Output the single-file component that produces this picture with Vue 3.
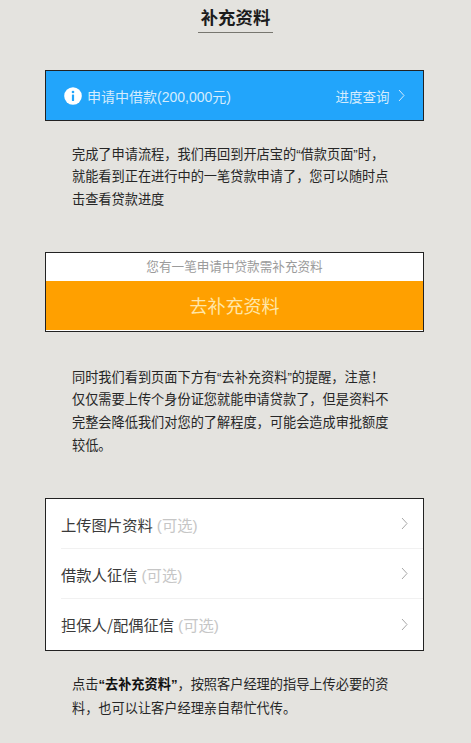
<script setup>
const rows = [
  { name: '上传图片资料', note: '(可选)' },
  { name: '借款人征信', note: '(可选)' },
  { name: '担保人/配偶征信', note: '(可选)' }
]
</script>

<template>
  <div class="page">
    <header class="head"><h1 class="title">补充资料</h1></header>

    <section class="card bluebar">
      <div class="bl">
        <svg class="info" width="18" height="18" viewBox="0 0 18 18"><circle cx="9" cy="9" r="8.8" fill="#fff"/><circle cx="9" cy="5" r="1.3" fill="#22a5fb"/><rect x="7.9" y="7.4" width="2.2" height="6.6" rx="0.6" fill="#22a5fb"/></svg>
        <span>申请中借款(200,000元)</span>
      </div>
      <div class="br">
        <span>进度查询</span>
        <svg width="7" height="13" viewBox="0 0 7 13"><path d="M1 1l5 5.5-5 5.5" fill="none" stroke="#cfe9fd" stroke-width="1"/></svg>
      </div>
    </section>

    <p class="para p1">完成了申请流程，我们再回到开店宝的“借款页面”时，就能看到正在进行中的一笔贷款申请了，您可以随时点击查看贷款进度</p>

    <section class="card cta">
      <div class="notice">您有一笔申请中贷款需补充资料</div>
      <div class="action">去补充资料</div>
    </section>

    <p class="para p2">同时我们看到页面下方有“去补充资料”的提醒，注意！仅仅需要上传个身份证您就能申请贷款了，但是资料不完整会降低我们对您的了解程度，可能会造成审批额度较低。</p>

    <section class="card list">
      <div v-for="r in rows" :key="r.name" class="row">
        <span class="rname">{{ r.name }}</span><span class="rnote">{{ r.note }}</span>
        <svg class="chev" width="7" height="13" viewBox="0 0 7 13"><path d="M1 1l5 5.5-5 5.5" fill="none" stroke="#a8a8a8" stroke-width="1"/></svg>
      </div>
    </section>

    <p class="para p3">点击<b>“去补充资料”</b>，按照客户经理的指导上传必要的资料，也可以让客户经理亲自帮忙代传。</p>
  </div>
</template>

<style>
html, body { margin: 0; background: #e4e3df; }
</style>

<style scoped>
.page {
  width: 471px;
  height: 743px;
  overflow: hidden;
  background-color: #e4e3df;
  font-family: "Liberation Sans", "Noto Sans CJK SC", sans-serif;
  color: #222;
  box-sizing: border-box;
  padding-top: 4px;
}
.head { display: flex; justify-content: center; }
.title {
  margin: 0;
  width: 75px;
  text-align: center;
  font-size: 17.4px;
  line-height: 28px;
  font-weight: 700;
  color: #1c1c1c;
  border-bottom: 1px solid #77766f;
  white-space: nowrap;
}
.card {
  margin: 0 47px 0 45px;
  box-sizing: border-box;
  border: 1.5px solid #222;
}
.bluebar {
  margin-top: 37px;
  height: 51px;
  background: #22a5fb;
  color: #d4ecfd;
  font-size: 14px;
  display: flex;
  align-items: center;
  justify-content: space-between;
  padding: 0 18.5px 0 18px;
}
.bl { display: flex; align-items: center; gap: 5px; }
.br { display: flex; align-items: center; gap: 8px; font-size: 13.5px; }
.info { flex: none; }
.para {
  margin: 0 78px 0 72px;
  font-size: 13.2px;
  line-height: 22.7px;
  color: #262626;
}
.p1 { margin-top: 22.6px; }
.cta { margin-top: 40.3px; height: 80px; background: #fff; overflow: hidden; }
.notice {
  height: 27.5px;
  padding-top: 1px;
  box-sizing: border-box;
  line-height: 26.5px;
  text-align: center;
  font-size: 12.6px;
  color: #9b9b9b;
}
.action {
  height: 49.5px;
  padding-top: 3px;
  box-sizing: border-box;
  line-height: 46.5px;
  text-align: center;
  background: #ffa000;
  color: #ffe6a8;
  font-size: 18px;
}
.p2 { margin-top: 34.6px; }
.list { margin-top: 40.6px; height: 153px; background: #fff; padding-left: 15px; }
.row {
  height: 50px;
  display: flex;
  align-items: center;
  padding-right: 15px;
  border-bottom: 1px solid #f1f1f1;
  box-sizing: border-box;
  font-size: 15.3px;
}
.row:last-child { border-bottom: 0; }
.rname { color: #3a3a3a; font-family: "Noto Sans CJK SC", sans-serif; }
.rnote { color: #c6c6c6; margin-left: 4px; }
.chev { margin-left: auto; }
.p3 { margin-top: 22.2px; line-height: 23.5px; }
.p3 b { font-weight: 700; color: #111; }
</style>
